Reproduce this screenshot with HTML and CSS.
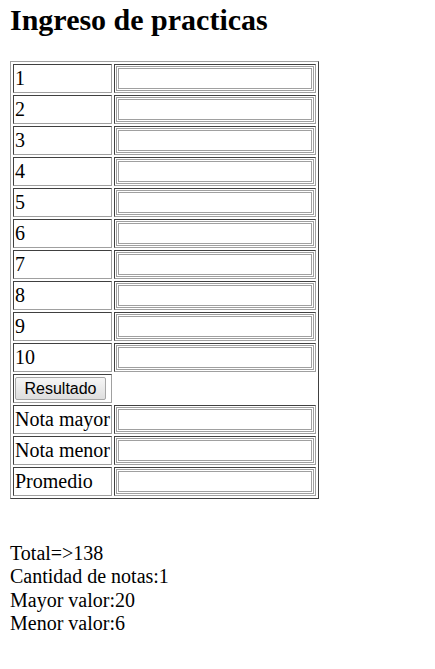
FILE: index.html
```html
<!DOCTYPE html>
<html lang="es">
<head>
<meta charset="utf-8">
<title>Ingreso de practicas</title>
<link rel="stylesheet" href="styles.css">
</head>
<body>
<h1 class="title">Ingreso de practicas</h1>
<table class="grid">
<tr><td class="label">1</td><td class="field"><input class="box" type="text"></td></tr>
<tr><td class="label">2</td><td class="field"><input class="box" type="text"></td></tr>
<tr><td class="label">3</td><td class="field"><input class="box" type="text"></td></tr>
<tr><td class="label">4</td><td class="field"><input class="box" type="text"></td></tr>
<tr><td class="label">5</td><td class="field"><input class="box" type="text"></td></tr>
<tr><td class="label">6</td><td class="field"><input class="box" type="text"></td></tr>
<tr><td class="label">7</td><td class="field"><input class="box" type="text"></td></tr>
<tr><td class="label">8</td><td class="field"><input class="box" type="text"></td></tr>
<tr><td class="label">9</td><td class="field"><input class="box" type="text"></td></tr>
<tr><td class="label">10</td><td class="field"><input class="box" type="text"></td></tr>
<tr><td class="label"><button class="btn" type="button">Resultado</button></td></tr>
<tr><td class="label">Nota mayor</td><td class="field"><input class="box" type="text"></td></tr>
<tr><td class="label">Nota menor</td><td class="field"><input class="box" type="text"></td></tr>
<tr><td class="label">Promedio</td><td class="field"><input class="box" type="text"></td></tr>
</table>
<div class="results">
<div>Total=&gt;138</div>
<div>Cantidad de notas:1</div>
<div>Mayor valor:20</div>
<div>Menor valor:6</div>
</div>
</body>
</html>
```
FILE: styles.css
```css
html, body {
  background: #fff;
}
body {
  margin: 0;
  padding: 1px 10px;
  font-family: "Liberation Serif", "Times New Roman", serif;
  font-size: 20px;
  color: #000;
}
.title {
  margin: 0 0 23px;
  font-size: 30px;
  font-weight: bold;
  line-height: 37px;
}
.grid {
  border-collapse: separate;
  border-spacing: 2px;
  border: 1px solid;
  border-color: #a0a0a0 #404040 #404040 #a0a0a0;
}
.grid td {
  padding: 1px;
  border: 1px solid;
  border-color: #404040 #a0a0a0 #a0a0a0 #404040;
  height: 25px;
  line-height: 23px;
  vertical-align: middle;
}
.label {
  width: 95px;
  white-space: nowrap;
}
.field {
  width: 198px;
}
.box {
  display: block;
  box-sizing: border-box;
  width: 198px;
  height: 25px;
  margin: 0;
  border: 3px double #a0a0a0;
  background: #fff;
  font: inherit;
}
.btn {
  display: block;
  box-sizing: border-box;
  width: 91px;
  height: 23px;
  margin: 0;
  padding: 0 8px;
  font-family: "Liberation Sans", Arial, sans-serif;
  font-size: 16px;
  line-height: 19px;
  color: #000;
  background: linear-gradient(#f6f6f6, #dedede);
  border: 1px solid #a6a6a6;
  border-radius: 2px;
}
.results {
  margin-top: 43px;
  line-height: 23.3px;
}
```
